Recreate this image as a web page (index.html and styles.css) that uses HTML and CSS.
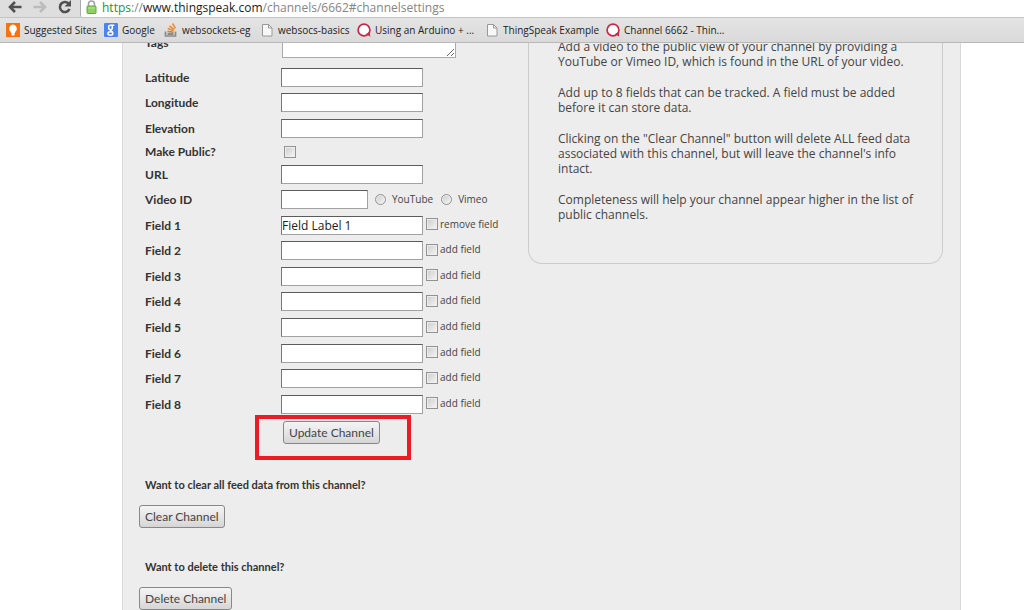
FILE: index.html
```
<!DOCTYPE html>
<html lang="en">
<head>
<meta charset="utf-8">
<title>Channel 6662 - ThingSpeak</title>
<link rel="stylesheet" href="styles.css">
</head>
<body>
<header class="browser">
  <div class="toolbar">
    <button class="nav" type="button" aria-label="Back"><svg width="14" height="14" viewBox="0 0 14 14"><path d="M13.500 7H2.500M7 2L2 7l5 5" fill="none" stroke="#505050" stroke-width="2.600"/></svg></button>
    <button class="nav" type="button" aria-label="Forward"><svg width="14" height="14" viewBox="0 0 14 14"><path d="M.5 7h11M7 2l5 5-5 5" fill="none" stroke="#bcbcbc" stroke-width="2.600"/></svg></button>
    <button class="nav" type="button" aria-label="Reload"><svg width="14" height="14" viewBox="0 0 14 14"><path d="M10.500 3.500A5 5 0 1 0 11.500 9" fill="none" stroke="#505050" stroke-width="2.600"/><path d="M13 0v6.500H6.500z" fill="#505050"/></svg></button>
    <div class="address">
      <svg width="11" height="14" viewBox="0 0 11 14"><path d="M2.500 7V4a3 3 0 0 1 6 0v3" fill="none" stroke="#a3a3a3" stroke-width="1.600"/><rect x="1" y="6" width="9" height="7.500" rx="1" fill="#8fd160" stroke="#5fa83a"/><path d="M2 8h7" stroke="#b9e89a"/></svg>
      <span class="url"><span class="secure">https</span>://<span class="host">www.thingspeak.com</span>/channels/6662#channelsettings</span>
    </div>
  </div>
  <nav class="bookmarks">
    <a class="mark" href="#"><svg width="14" height="14" viewBox="0 0 14 14"><rect width="14" height="14" fill="#f9700f"/><path d="M7 1.500a4 4 0 0 1 2.500 7L9 10H5l-.5-1.500A4 4 0 0 1 7 1.500z" fill="#fff"/><path d="M5.500 10h3v2.500h-3z" fill="#fff"/></svg>Suggested Sites</a>
    <a class="mark google" href="#"><svg width="14" height="14" viewBox="0 0 14 14"><rect width="14" height="14" rx="1" fill="#4b85ec"/><ellipse cx="6.500" cy="4.500" rx="1.900" ry="2.200" fill="none" stroke="#fff" stroke-width="1.500"/><path d="M7 2.200h3.300M7 6.500c-1.500 1.200 1 1.500 1.600 2.600" fill="none" stroke="#fff" stroke-width="1.400"/><ellipse cx="6.400" cy="10.400" rx="2.500" ry="1.700" fill="none" stroke="#fff" stroke-width="1.500"/></svg>Google</a>
    <a class="mark stack" href="#"><svg width="14" height="14" viewBox="0 0 14 14"><path d="M1.500 8.500v4.500h10V8.500" fill="none" stroke="#8a8a8a" stroke-width="1.700"/><path d="M3.500 11h6" stroke="#777" stroke-width="1.600"/><path d="M3.500 8.500l6 .8" stroke="#a88a60" stroke-width="1.600"/><path d="M3.800 5.500l5.700 2.300M5.500 3l4.800 3.600M8.500.5l3 4.800" stroke="#f08a2c" stroke-width="1.600"/></svg>websockets-eg</a>
    <a class="mark basics" href="#"><svg width="14" height="14" viewBox="0 0 14 14"><path d="M2.500 1.500h6l3.500 3.500v8H2.500z" fill="#f8f8f8" stroke="#999"/><path d="M8.500 1.500V5H12" fill="none" stroke="#999"/></svg>websocs-basics</a>
    <a class="mark arduino" href="#"><svg width="14" height="14" viewBox="0 0 14 14"><circle cx="7" cy="7" r="5.900" fill="#fff" stroke="#cb2948" stroke-width="1.700"/><path d="M9 11l3.500-2 .9 4.800z" fill="#cb2948"/></svg>Using an Arduino + ...</a>
    <a class="mark example" href="#"><svg width="14" height="14" viewBox="0 0 14 14"><path d="M2.500 1.500h6l3.500 3.500v8H2.500z" fill="#f8f8f8" stroke="#999"/><path d="M8.500 1.500V5H12" fill="none" stroke="#999"/></svg>ThingSpeak Example</a>
    <a class="mark" href="#"><svg width="14" height="14" viewBox="0 0 14 14"><circle cx="7" cy="7" r="5.900" fill="#fff" stroke="#cb2948" stroke-width="1.700"/><path d="M9 11l3.500-2 .9 4.800z" fill="#cb2948"/></svg>Channel 6662 - Thin...</a>
  </nav>
</header>
<main class="page">
  <div class="content">
    <div class="settings">
      <form class="form">
        <div class="row tags"><label class="name" for="tags">Tags</label><textarea class="area" id="tags"></textarea></div>
        <div class="group location">
          <div class="row"><label class="name" for="lat">Latitude</label><input class="text" id="lat" type="text"></div>
          <div class="row"><label class="name" for="lon">Longitude</label><input class="text" id="lon" type="text"></div>
          <div class="row"><label class="name" for="ele">Elevation</label><input class="text" id="ele" type="text"></div>
        </div>
        <div class="row public"><label class="name" for="pub">Make Public?</label><input class="tick" id="pub" type="checkbox"></div>
        <div class="row link"><label class="name" for="url">URL</label><input class="text" id="url" type="text"></div>
        <div class="group fields">
          <div class="row"><label class="name" for="vid">Video ID</label><input class="text short" id="vid" type="text"><label class="source"><input class="radio" type="radio" name="source">YouTube</label><label class="source"><input class="radio" type="radio" name="source">Vimeo</label></div>
          <div class="row"><label class="name" for="f1">Field 1</label><input class="text" id="f1" type="text" value="Field Label 1"><label class="toggle"><input class="tick" type="checkbox">remove field</label></div>
          <div class="row"><label class="name" for="f2">Field 2</label><input class="text" id="f2" type="text"><label class="toggle"><input class="tick" type="checkbox">add field</label></div>
          <div class="row"><label class="name" for="f3">Field 3</label><input class="text" id="f3" type="text"><label class="toggle"><input class="tick" type="checkbox">add field</label></div>
          <div class="row"><label class="name" for="f4">Field 4</label><input class="text" id="f4" type="text"><label class="toggle"><input class="tick" type="checkbox">add field</label></div>
          <div class="row"><label class="name" for="f5">Field 5</label><input class="text" id="f5" type="text"><label class="toggle"><input class="tick" type="checkbox">add field</label></div>
          <div class="row"><label class="name" for="f6">Field 6</label><input class="text" id="f6" type="text"><label class="toggle"><input class="tick" type="checkbox">add field</label></div>
          <div class="row"><label class="name" for="f7">Field 7</label><input class="text" id="f7" type="text"><label class="toggle"><input class="tick" type="checkbox">add field</label></div>
          <div class="row"><label class="name" for="f8">Field 8</label><input class="text" id="f8" type="text"><label class="toggle"><input class="tick" type="checkbox">add field</label></div>
        </div>
        <div class="submit"><button class="button" type="submit">Update Channel</button><span class="highlight"></span></div>
      </form>
      <aside class="help">
        <p class="para">Add a video to the public view of your channel by providing a<br>YouTube or Vimeo ID, which is found in the URL of your video.</p>
        <p class="para">Add up to 8 fields that can be tracked. A field must be added<br>before it can store data.</p>
        <p class="para">Clicking on the "Clear Channel" button will delete ALL feed data<br>associated with this channel, but will leave the channel's info<br>intact.</p>
        <p class="para">Completeness will help your channel appear higher in the list of<br>public channels.</p>
      </aside>
    </div>
    <section class="action"><h2 class="question">Want to clear all feed data from this channel?</h2><button class="button" type="button">Clear Channel</button></section>
    <section class="action"><h2 class="question">Want to delete this channel?</h2><button class="button" type="button">Delete Channel</button></section>
  </div>
</main>
</body>
</html>
```
FILE: styles.css
```
* { box-sizing: border-box; }
body {
  margin: 0;
  height: 100vh;
  display: flex;
  flex-direction: column;
  overflow: hidden;
  background: #fff;
  color: #444;
  font: 12px/15px "Open Sans", sans-serif;
}
button, input, textarea { font: inherit; margin: 0; }

.browser { flex: none; background: #dedede; border-bottom: 1px solid #b8b8b8; }
.toolbar { display: flex; height: 18px; padding-left: 8px; border-bottom: 1px solid #c4c4c4; }
.nav { width: 25px; height: 14px; padding: 0; border: 0; background: none; text-align: left; }
.nav svg, .mark svg, .address svg { display: block; flex: none; }
.address {
  flex: 1;
  display: flex;
  gap: 5px;
  margin-left: -3px;
  padding-left: 5px;
  background: #fff;
  border-left: 1px solid #aaa;
  border-bottom-left-radius: 2px;
}
.url { color: #858585; white-space: nowrap; }
.secure { color: #199a19; }
.host { color: #222; }
.bookmarks {
  display: flex;
  align-items: center;
  height: 24px;
  padding-left: 6px;
  background: linear-gradient(#e4e4e4, #dadada);
}
.mark {
  display: flex;
  align-items: center;
  gap: 4px;
  width: 98px;
  color: #222;
  font-size: 10px;
  text-decoration: none;
  white-space: nowrap;
}
.google { width: 60px; }
.stack { width: 96px; }
.basics { width: 97px; }
.arduino { width: 128px; }
.example { width: 121px; }

.page { flex: 1; min-height: 0; overflow: hidden; }
.content {
  min-height: 100%;
  margin: 0 63px 0 122px;
  background: #ededed;
  border: solid #d9d9d9;
  border-width: 0 1px;
}
.settings { display: flex; justify-content: space-between; padding: 0 17px 0 22px; }
.row { display: flex; align-items: center; }
.name { width: 136px; color: #333; font: bold 12px/15px Lato, sans-serif; }
.tags { height: 22px; align-items: flex-start; }
.tags .name { margin-top: -8px; }
.area {
  width: 174px;
  height: 38px;
  margin: -23px 0 0 1px;
  background: #fff;
  border: 1px solid #aaa;
}
.group { display: grid; grid-auto-rows: 1fr; }
.location { height: 76px; }
.public { height: 21px; }
.public .tick { margin-left: 3px; }
.link { height: 25px; }
.fields { height: 230px; }
.text {
  width: 142px;
  height: 19px;
  padding: 0;
  color: #222;
  background: #fff;
  border: 1px solid #a2a2a2;
  border-top-color: #5c5c5c;
  border-left-color: #777;
  border-radius: 0;
}
.short { width: 87px; margin-right: 7px; }
.tick, .radio {
  appearance: none;
  flex: none;
  width: 12px;
  height: 12px;
  border: 1px solid #929292;
  background: linear-gradient(135deg, #ccc, #f6f6f6);
  box-shadow: inset 0 0 0 1px #eee;
}
.radio { width: 11px; height: 11px; border-radius: 50%; }
.source, .toggle { display: flex; align-items: center; font-size: 10px; white-space: nowrap; }
.source { gap: 6px; margin-right: 8px; }
.toggle { gap: 2px; margin: 0 0 2px 3px; }
.submit { position: relative; display: flex; padding: 4px 0 0 138px; }
.highlight {
  position: absolute;
  left: 110px;
  top: -2px;
  width: 156px;
  height: 45px;
  border: 4px solid #ed1c24;
  pointer-events: none;
}
.button {
  height: 23px;
  padding: 0 5px;
  color: #444;
  font: 12px/15px Lato, sans-serif;
  background: linear-gradient(#f4f4f4, #e6e6e6 50%, #d5d5d5);
  border: 1px solid #888;
  border-radius: 3px;
}
.help {
  width: 415px;
  height: 221px;
  padding: 0 29px;
  border: 1px solid #ccc;
  border-top: 0;
  border-radius: 0 0 14px 14px;
}
.para { margin: 0 0 16px; white-space: nowrap; }
.para:first-child { margin-top: -4px; }
.action { display: flex; flex-direction: column; align-items: flex-start; gap: 13px; padding: 33px 0 0 16px; }
.action + .action { padding-top: 31px; }
.question { margin: 0 0 0 6px; color: #333; font: bold 11px/15px Lato, sans-serif; }
```
